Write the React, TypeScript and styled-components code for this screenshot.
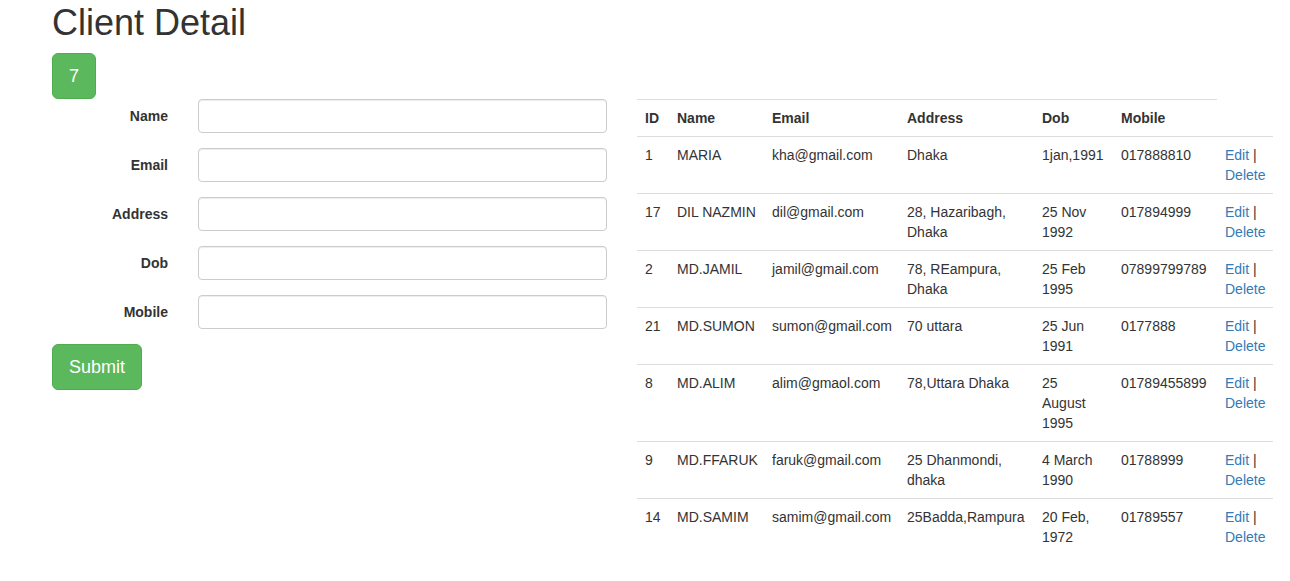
import React from "react";
import styled, { createGlobalStyle } from "styled-components";

const GlobalStyle = createGlobalStyle`
  * { box-sizing: border-box; }
  html, body { margin: 0; padding: 0; background: #fff; }
  body {
    font-family: "Liberation Sans", Helvetica, Arial, sans-serif;
    font-size: 14px;
    line-height: 1.42857143;
    color: #333;
  }
`;

const Page = styled.div`
  padding-left: 52px;
`;

const Title = styled.h1`
  font-size: 36px;
  font-weight: 500;
  line-height: 1.1;
  margin: 3px 0 10px;
  color: #333;
`;

const LargeButton = styled.button`
  display: inline-block;
  padding: 10px 16px;
  font-family: inherit;
  font-size: 18px;
  line-height: 1.3333333;
  border-radius: 6px;
  color: #fff;
  background-color: #5cb85c;
  border: 1px solid #4cae4c;
  cursor: pointer;
`;

const Row = styled.div`
  display: flex;
  align-items: flex-start;
  gap: 30px;
`;

const FormColumn = styled.form`
  width: 555px;
  flex: none;
  display: flex;
  flex-direction: column;
  align-items: flex-start;
`;

const FormGroup = styled.div`
  display: flex;
  gap: 30px;
  width: 100%;
  margin-bottom: 15px;
`;

const Label = styled.label`
  width: 116px;
  flex: none;
  text-align: right;
  font-weight: bold;
  padding-top: 7px;
`;

const Input = styled.input`
  width: 409px;
  height: 34px;
  padding: 6px 12px;
  font-family: inherit;
  font-size: 14px;
  color: #555;
  background: #fff;
  border: 1px solid #ccc;
  border-radius: 4px;
  box-shadow: inset 0 1px 1px rgba(0, 0, 0, 0.075);
`;

const TableColumn = styled.div`
  width: 555px;
  flex: none;
`;

const Table = styled.table`
  width: 636px;
  table-layout: fixed;
  border-collapse: separate;
  border-spacing: 0;
`;

const HeadCell = styled.th`
  padding: 8px;
  text-align: left;
  font-weight: bold;
  vertical-align: bottom;
  border-top: 1px solid #ddd;
  line-height: 1.42857143;
`;

const Cell = styled.td<{ $tight?: boolean }>`
  padding: 8px;
  padding-right: ${(p) => (p.$tight ? "10px" : "8px")};
  vertical-align: top;
  border-top: 1px solid #ddd;
  line-height: 1.42857143;
`;

const Link = styled.a`
  color: #337ab7;
  text-decoration: none;
`;

type Client = {
  id: string;
  name: string;
  email: string;
  address: string;
  dob: string;
  mobile: string;
};

const clients: Client[] = [
  { id: "1", name: "MARIA", email: "kha@gmail.com", address: "Dhaka", dob: "1jan,1991", mobile: "017888810" },
  { id: "17", name: "DIL NAZMIN", email: "dil@gmail.com", address: "28, Hazaribagh, Dhaka", dob: "25 Nov 1992", mobile: "017894999" },
  { id: "2", name: "MD.JAMIL", email: "jamil@gmail.com", address: "78, REampura, Dhaka", dob: "25 Feb 1995", mobile: "07899799789" },
  { id: "21", name: "MD.SUMON", email: "sumon@gmail.com", address: "70 uttara", dob: "25 Jun 1991", mobile: "0177888" },
  { id: "8", name: "MD.ALIM", email: "alim@gmaol.com", address: "78,Uttara Dhaka", dob: "25 August 1995", mobile: "01789455899" },
  { id: "9", name: "MD.FFARUK", email: "faruk@gmail.com", address: "25 Dhanmondi, dhaka", dob: "4 March 1990", mobile: "01788999" },
  { id: "14", name: "MD.SAMIM", email: "samim@gmail.com", address: "25Badda,Rampura", dob: "20 Feb, 1972", mobile: "01789557" },
];

const fields = ["Name", "Email", "Address", "Dob", "Mobile"];
const colWidths = [32, 95, 135, 135, 79, 104, 56];

export default function App() {
  return (
    <>
      <GlobalStyle />
      <Page>
        <Title>Client Detail</Title>
        <LargeButton type="button">7</LargeButton>
        <Row>
          <FormColumn onSubmit={(e) => e.preventDefault()}>
            {fields.map((f) => (
              <FormGroup key={f}>
                <Label>{f}</Label>
                <Input type="text" />
              </FormGroup>
            ))}
            <LargeButton type="submit">Submit</LargeButton>
          </FormColumn>
          <TableColumn>
            <Table>
              <colgroup>
                {colWidths.map((w, i) => (
                  <col key={i} style={{ width: `${w}px` }} />
                ))}
              </colgroup>
              <thead>
                <tr>
                  <HeadCell>ID</HeadCell>
                  <HeadCell>Name</HeadCell>
                  <HeadCell>Email</HeadCell>
                  <HeadCell>Address</HeadCell>
                  <HeadCell>Dob</HeadCell>
                  <HeadCell>Mobile</HeadCell>
                </tr>
              </thead>
              <tbody>
                {clients.map((c) => (
                  <tr key={c.id}>
                    <Cell>{c.id}</Cell>
                    <Cell>{c.name}</Cell>
                    <Cell>{c.email}</Cell>
                    <Cell>{c.address}</Cell>
                    <Cell $tight>{c.dob}</Cell>
                    <Cell>{c.mobile}</Cell>
                    <Cell>
                      <Link href="#">Edit</Link> | <Link href="#">Delete</Link>
                    </Cell>
                  </tr>
                ))}
              </tbody>
            </Table>
          </TableColumn>
        </Row>
      </Page>
    </>
  );
}
